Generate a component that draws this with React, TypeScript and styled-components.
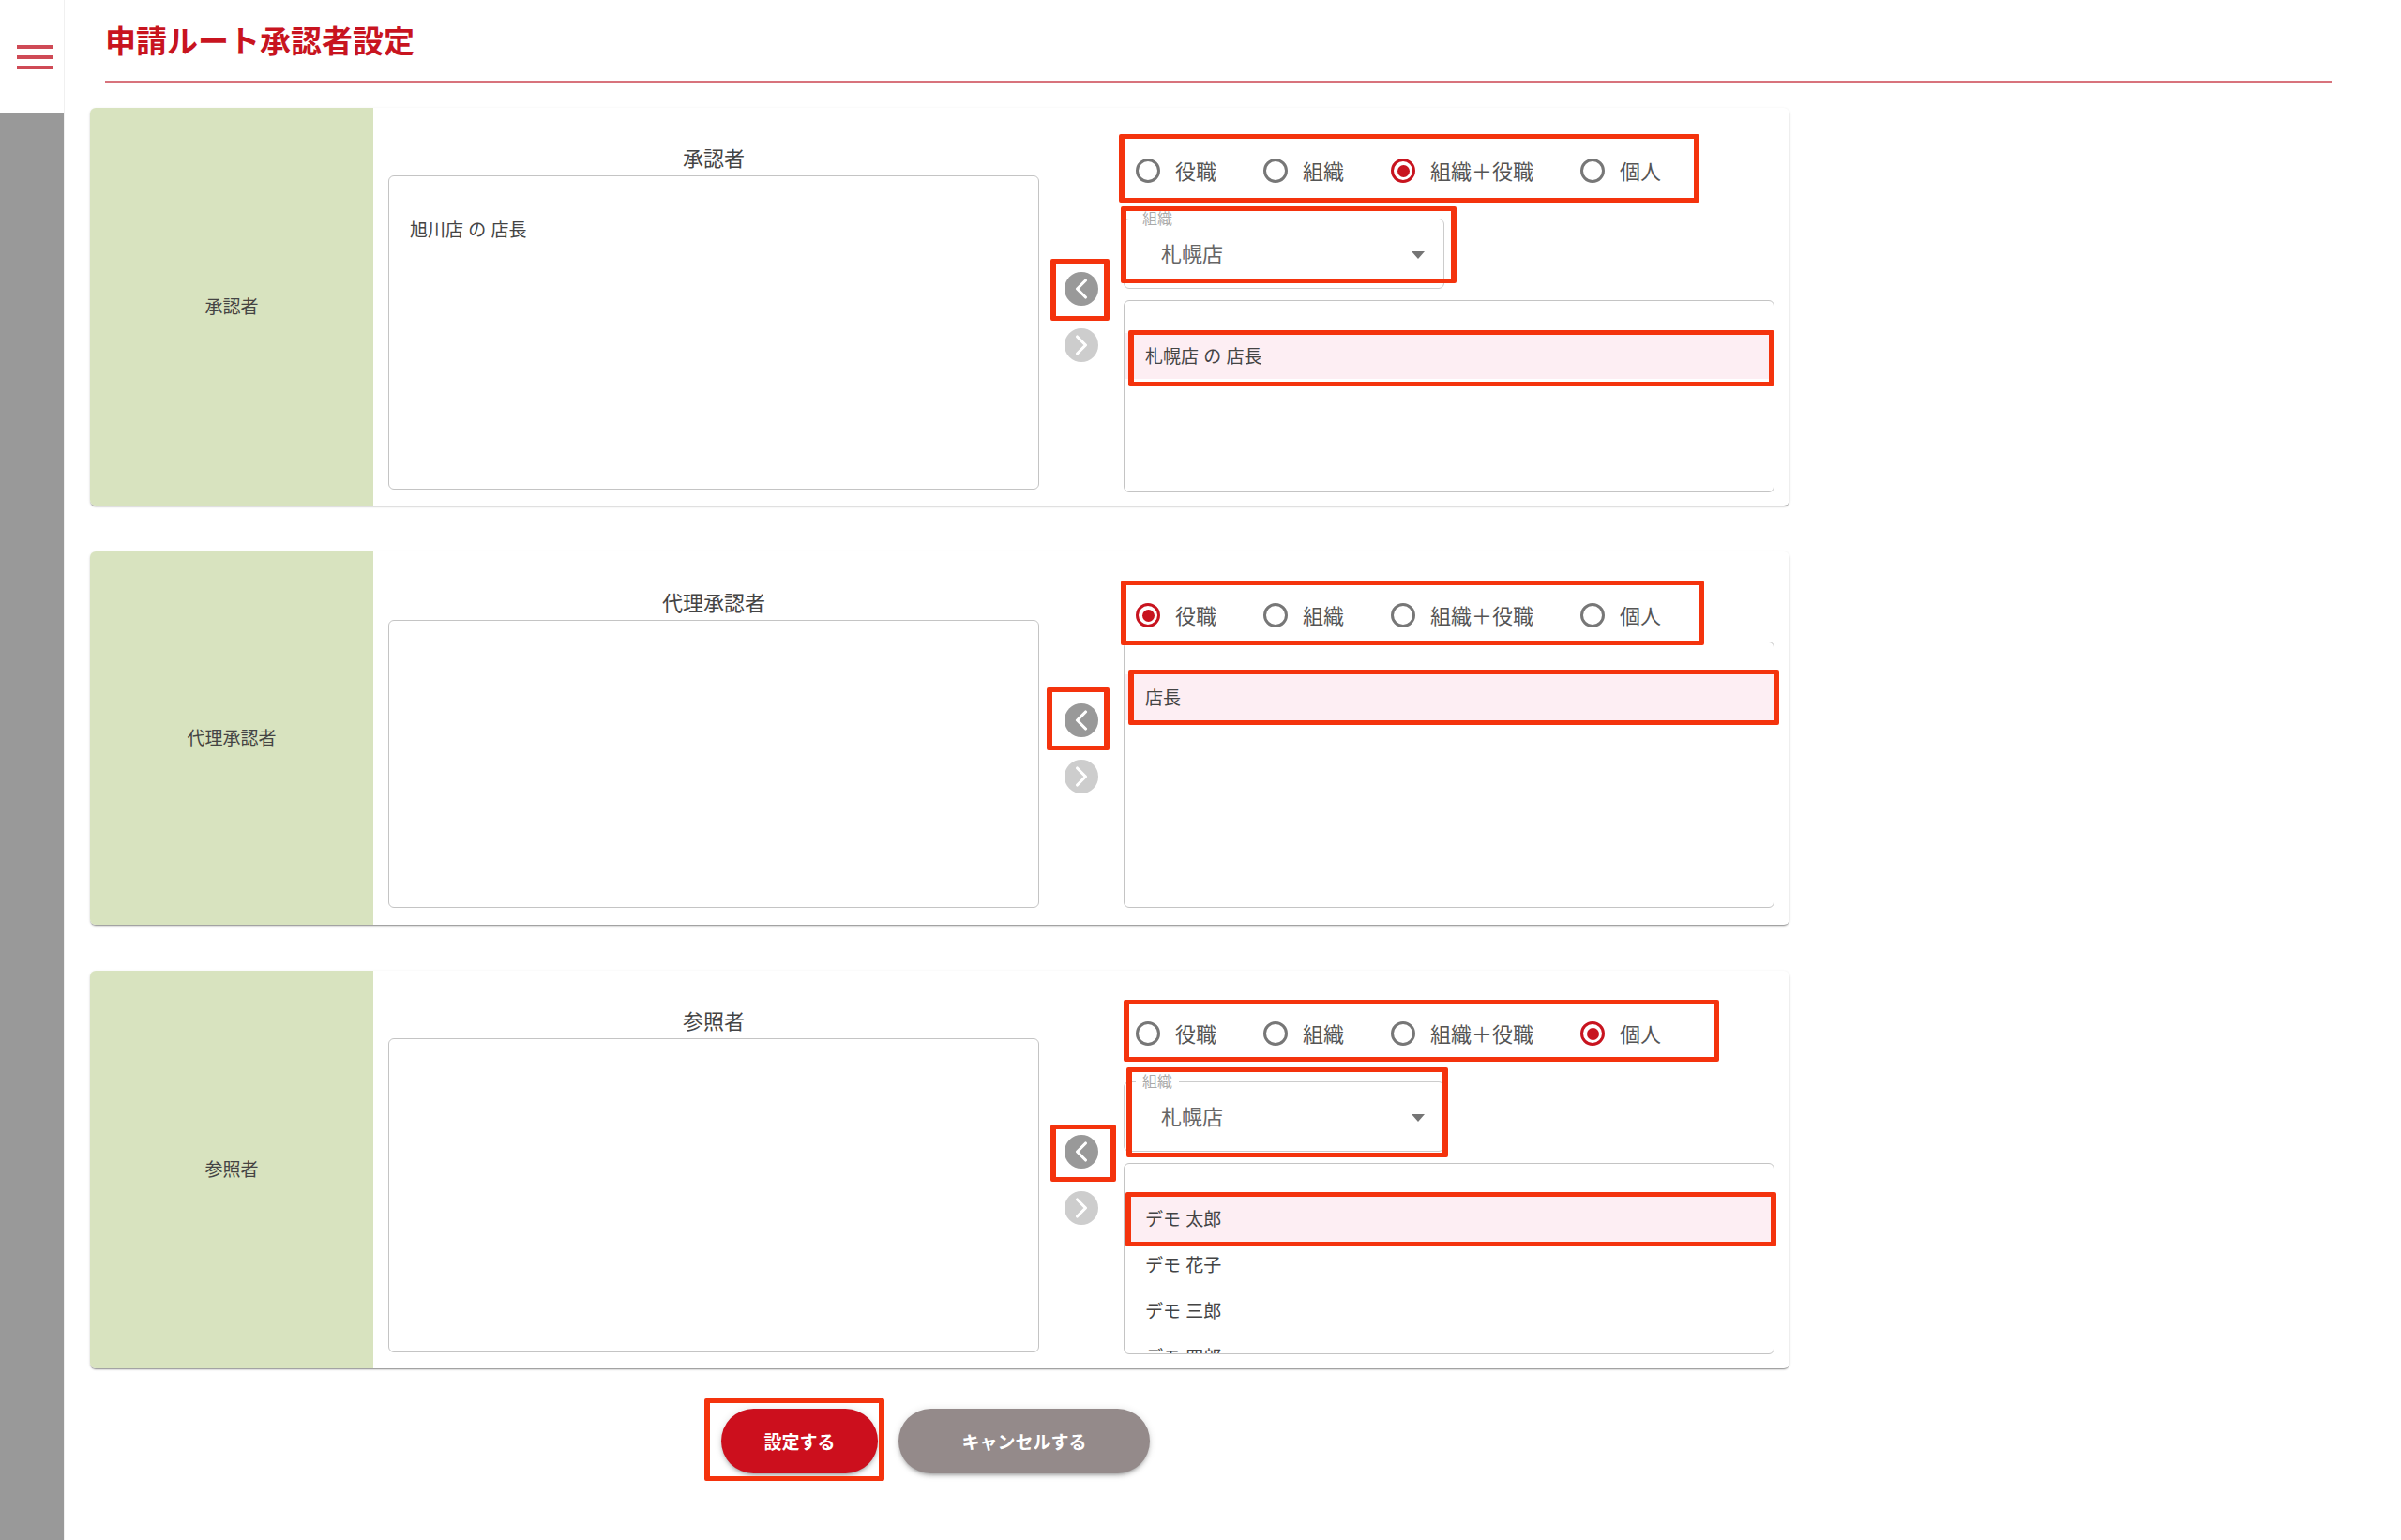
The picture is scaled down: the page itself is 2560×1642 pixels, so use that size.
import React from 'react';
import styled, { createGlobalStyle } from 'styled-components';
import { ChevronLeft, ChevronRight } from 'lucide-react';

const GlobalStyle = createGlobalStyle`
  * { box-sizing: border-box; }
  html, body { margin: 0; padding: 0; background: #fff; }
  body {
    font-family: "Noto Sans CJK JP", "Noto Sans", sans-serif;
    color: #444;
  }
`;

const Page = styled.div`
  display: flex;
  width: 2560px;
  height: 1642px;
  overflow: hidden;
`;

const Sidebar = styled.aside`
  width: 69px;
  flex: none;
  display: flex;
  flex-direction: column;
  background: #999;
  border-right: 1px solid #f0f0f0;
`;

const MenuArea = styled.div`
  height: 121px;
  padding-left: 6px;
  background: #fff;
  display: flex;
  align-items: center;
  justify-content: center;
`;

const Main = styled.main`
  flex: 1;
  padding-left: 27px;
`;

const Header = styled.header`
  margin-left: 16px;
  width: 2374px;
  height: 88px;
  padding-bottom: 2px;
  border-bottom: 2px solid #d8737c;
  display: flex;
  align-items: center;
`;

const Title = styled.h1`
  margin: 0;
  font-size: 33px;
  font-weight: 700;
  color: #c8141f;
`;

const Cards = styled.div`
  width: 1812px;
  margin-top: 27px;
  display: flex;
  flex-direction: column;
  gap: 49px;
`;

const Card = styled.section<{ $height: number }>`
  position: relative;
  height: ${(p) => p.$height}px;
  display: flex;
  border-radius: 6px;
  background: #fff;
  overflow: hidden;
  box-shadow: 0 2px 2px -1px rgba(0, 0, 0, 0.28), 0 1px 1px rgba(0, 0, 0, 0.14), 0 1px 3px rgba(0, 0, 0, 0.12);
`;

const CardLabel = styled.div`
  width: 302px;
  flex: none;
  padding-bottom: 3px;
  background: #d8e3bf;
  display: flex;
  align-items: center;
  justify-content: center;
  font-size: 19px;
  color: #444;
`;

const AssignedColumn = styled.div<{ $top: number; $bottom: number }>`
  width: 694px;
  margin-left: 16px;
  flex: none;
  display: flex;
  flex-direction: column;
  padding-top: ${(p) => p.$top}px;
  padding-bottom: ${(p) => p.$bottom}px;
`;

const ColumnTitle = styled.div`
  height: 33px;
  line-height: 27px;
  text-align: center;
  font-size: 22px;
  color: #444;
`;

const ListBox = styled.div<{ $gap?: number; $top?: number }>`
  flex: 1;
  min-height: 0;
  margin-top: ${(p) => p.$gap ?? 0}px;
  padding-top: ${(p) => p.$top ?? 34}px;
  border: 1px solid #c4c4c4;
  border-radius: 6px;
  overflow: hidden;
`;

const ListRow = styled.div<{ $selected?: boolean }>`
  height: 49px;
  padding: 0 0 3px 22px;
  display: flex;
  align-items: center;
  font-size: 19px;
  word-spacing: 1px;
  color: #444;
  background: ${(p) => (p.$selected ? '#fdeef3' : 'transparent')};
`;

const MoveColumn = styled.div`
  width: 90px;
  flex: none;
  padding-top: 22px;
  display: flex;
  flex-direction: column;
  align-items: center;
  justify-content: center;
  gap: 24px;
`;

const MoveButton = styled.div<{ $disabled?: boolean }>`
  width: 36px;
  height: 36px;
  border-radius: 50%;
  background: ${(p) => (p.$disabled ? '#cdcdcd' : '#999')};
  color: #fff;
  display: flex;
  align-items: center;
  justify-content: center;
`;

const PickerColumn = styled.div<{ $top: number; $bottom: number }>`
  width: 694px;
  flex: none;
  display: flex;
  flex-direction: column;
  padding-top: ${(p) => p.$top}px;
  padding-bottom: ${(p) => p.$bottom}px;
`;

const RadioRow = styled.div`
  height: 44px;
  flex: none;
  padding-left: 13px;
  display: flex;
  align-items: center;
  gap: 50px;
`;

const RadioItem = styled.label`
  display: flex;
  align-items: center;
  gap: 16px;
  font-size: 22px;
  color: #555;
`;

const RadioText = styled.span`
  margin-top: -3px;
`;

const RadioCircle = styled.span<{ $checked?: boolean }>`
  width: 26px;
  height: 26px;
  flex: none;
  border-radius: 50%;
  border: 3px solid ${(p) => (p.$checked ? '#c8141f' : '#777')};
  display: flex;
  align-items: center;
  justify-content: center;

  &::after {
    content: '';
    width: 13px;
    height: 13px;
    border-radius: 50%;
    background: ${(p) => (p.$checked ? '#c8141f' : 'transparent')};
  }
`;

const SelectBox = styled.div`
  position: relative;
  width: 342px;
  height: 75px;
  flex: none;
  margin-top: 29px;
  padding: 0 20px 0 39px;
  border: 1px solid #ccc;
  border-radius: 6px;
  display: flex;
  align-items: center;
  justify-content: space-between;
  font-size: 22px;
  color: #666;
`;

const SelectValue = styled.span`
  margin-top: -3px;
`;

const SelectLegend = styled.span`
  position: absolute;
  top: -14px;
  left: 12px;
  padding: 0 7px;
  background: #fff;
  font-size: 16px;
  line-height: 24px;
  color: #aaa;
`;

const SelectArrow = styled.span`
  width: 0;
  height: 0;
  margin-top: 2px;
  border-left: 7px solid transparent;
  border-right: 7px solid transparent;
  border-top: 8px solid #757575;
`;

const Annotation = styled.div<{ $x: number; $y: number; $w: number; $h: number }>`
  position: absolute;
  left: ${(p) => p.$x}px;
  top: ${(p) => p.$y}px;
  width: ${(p) => p.$w}px;
  height: ${(p) => p.$h}px;
  border-style: solid;
  border-width: 5px 6px;
  border-color: #f4330d;
  border-radius: 2px;
  pointer-events: none;
`;

const ButtonRow = styled.div`
  position: relative;
  width: 1812px;
  margin-top: 43px;
  padding-left: 673px;
  display: flex;
  gap: 22px;
`;

const PillButton = styled.button<{ $width: number; $color: string }>`
  width: ${(p) => p.$width}px;
  height: 69px;
  border: none;
  border-radius: 35px;
  background: ${(p) => p.$color};
  color: #fff;
  font-family: inherit;
  font-size: 19px;
  font-weight: 700;
  box-shadow: 0 3px 3px -2px rgba(0, 0, 0, 0.2), 0 3px 4px rgba(0, 0, 0, 0.14), 0 1px 8px rgba(0, 0, 0, 0.12);
`;

type Box = [number, number, number, number];

interface CardData {
  label: string;
  height: number;
  top: number;
  leftBottom: number;
  rightBottom: number;
  assigned?: string;
  checked: number;
  showSelect: boolean;
  listGap: number;
  rows: string[];
  boxes: Box[];
}

const radioLabels = ['役職', '組織', '組織＋役職', '個人'];

const cards: CardData[] = [
  {
    label: '承認者',
    height: 424,
    top: 39,
    leftBottom: 17,
    rightBottom: 14,
    assigned: '旭川店 の 店長',
    checked: 2,
    showSelect: true,
    listGap: 12,
    rows: ['札幌店 の 店長'],
    boxes: [
      [1097, 28, 619, 73],
      [1099, 105, 358, 82],
      [1024, 161, 63, 66],
      [1107, 237, 689, 60],
    ],
  },
  {
    label: '代理承認者',
    height: 398,
    top: 40,
    leftBottom: 18,
    rightBottom: 18,
    checked: 0,
    showSelect: false,
    listGap: 6,
    rows: ['店長'],
    boxes: [
      [1099, 31, 622, 69],
      [1020, 145, 67, 67],
      [1107, 126, 694, 59],
    ],
  },
  {
    label: '参照者',
    height: 424,
    top: 39,
    leftBottom: 17,
    rightBottom: 15,
    checked: 3,
    showSelect: true,
    listGap: 12,
    rows: ['デモ 太郎', 'デモ 花子', 'デモ 三郎', 'デモ 四郎'],
    boxes: [
      [1102, 31, 635, 66],
      [1105, 103, 343, 96],
      [1024, 164, 70, 61],
      [1104, 236, 694, 58],
    ],
  },
];

const App: React.FC = () => (
  <>
    <GlobalStyle />
    <Page>
      <Sidebar>
        <MenuArea>
          <svg width="38" height="26" viewBox="0 0 38 26" fill="#cf4a56">
            <rect x="0" y="0" width="38" height="4" />
            <rect x="0" y="11" width="38" height="4" />
            <rect x="0" y="22" width="38" height="4" />
          </svg>
        </MenuArea>
      </Sidebar>
      <Main>
        <Header>
          <Title>申請ルート承認者設定</Title>
        </Header>
        <Cards>
          {cards.map((card) => (
            <Card key={card.label} $height={card.height}>
              <CardLabel>{card.label}</CardLabel>
              <AssignedColumn $top={card.top} $bottom={card.leftBottom}>
                <ColumnTitle>{card.label}</ColumnTitle>
                <ListBox $top={32}>{card.assigned && <ListRow>{card.assigned}</ListRow>}</ListBox>
              </AssignedColumn>
              <MoveColumn>
                <MoveButton>
                  <ChevronLeft size={36} strokeWidth={2.1} />
                </MoveButton>
                <MoveButton $disabled>
                  <ChevronRight size={36} strokeWidth={2.1} />
                </MoveButton>
              </MoveColumn>
              <PickerColumn $top={card.top + 6} $bottom={card.rightBottom}>
                <RadioRow>
                  {radioLabels.map((text, i) => (
                    <RadioItem key={text}>
                      <RadioCircle $checked={i === card.checked} />
                      <RadioText>{text}</RadioText>
                    </RadioItem>
                  ))}
                </RadioRow>
                {card.showSelect && (
                  <SelectBox>
                    <SelectLegend>組織</SelectLegend>
                    <SelectValue>札幌店</SelectValue>
                    <SelectArrow />
                  </SelectBox>
                )}
                <ListBox $gap={card.listGap}>
                  {card.rows.map((row, i) => (
                    <ListRow key={row} $selected={i === 0}>
                      {row}
                    </ListRow>
                  ))}
                </ListBox>
              </PickerColumn>
              {card.boxes.map(([x, y, w, h]) => (
                <Annotation key={`${x}-${y}`} $x={x} $y={y} $w={w} $h={h} />
              ))}
            </Card>
          ))}
        </Cards>
        <ButtonRow>
          <PillButton $width={167} $color="#cc0f1d">
            設定する
          </PillButton>
          <PillButton $width={268} $color="#948a8a">
            キャンセルする
          </PillButton>
          <Annotation $x={655} $y={-11} $w={192} $h={88} />
        </ButtonRow>
      </Main>
    </Page>
  </>
);

export default App;
